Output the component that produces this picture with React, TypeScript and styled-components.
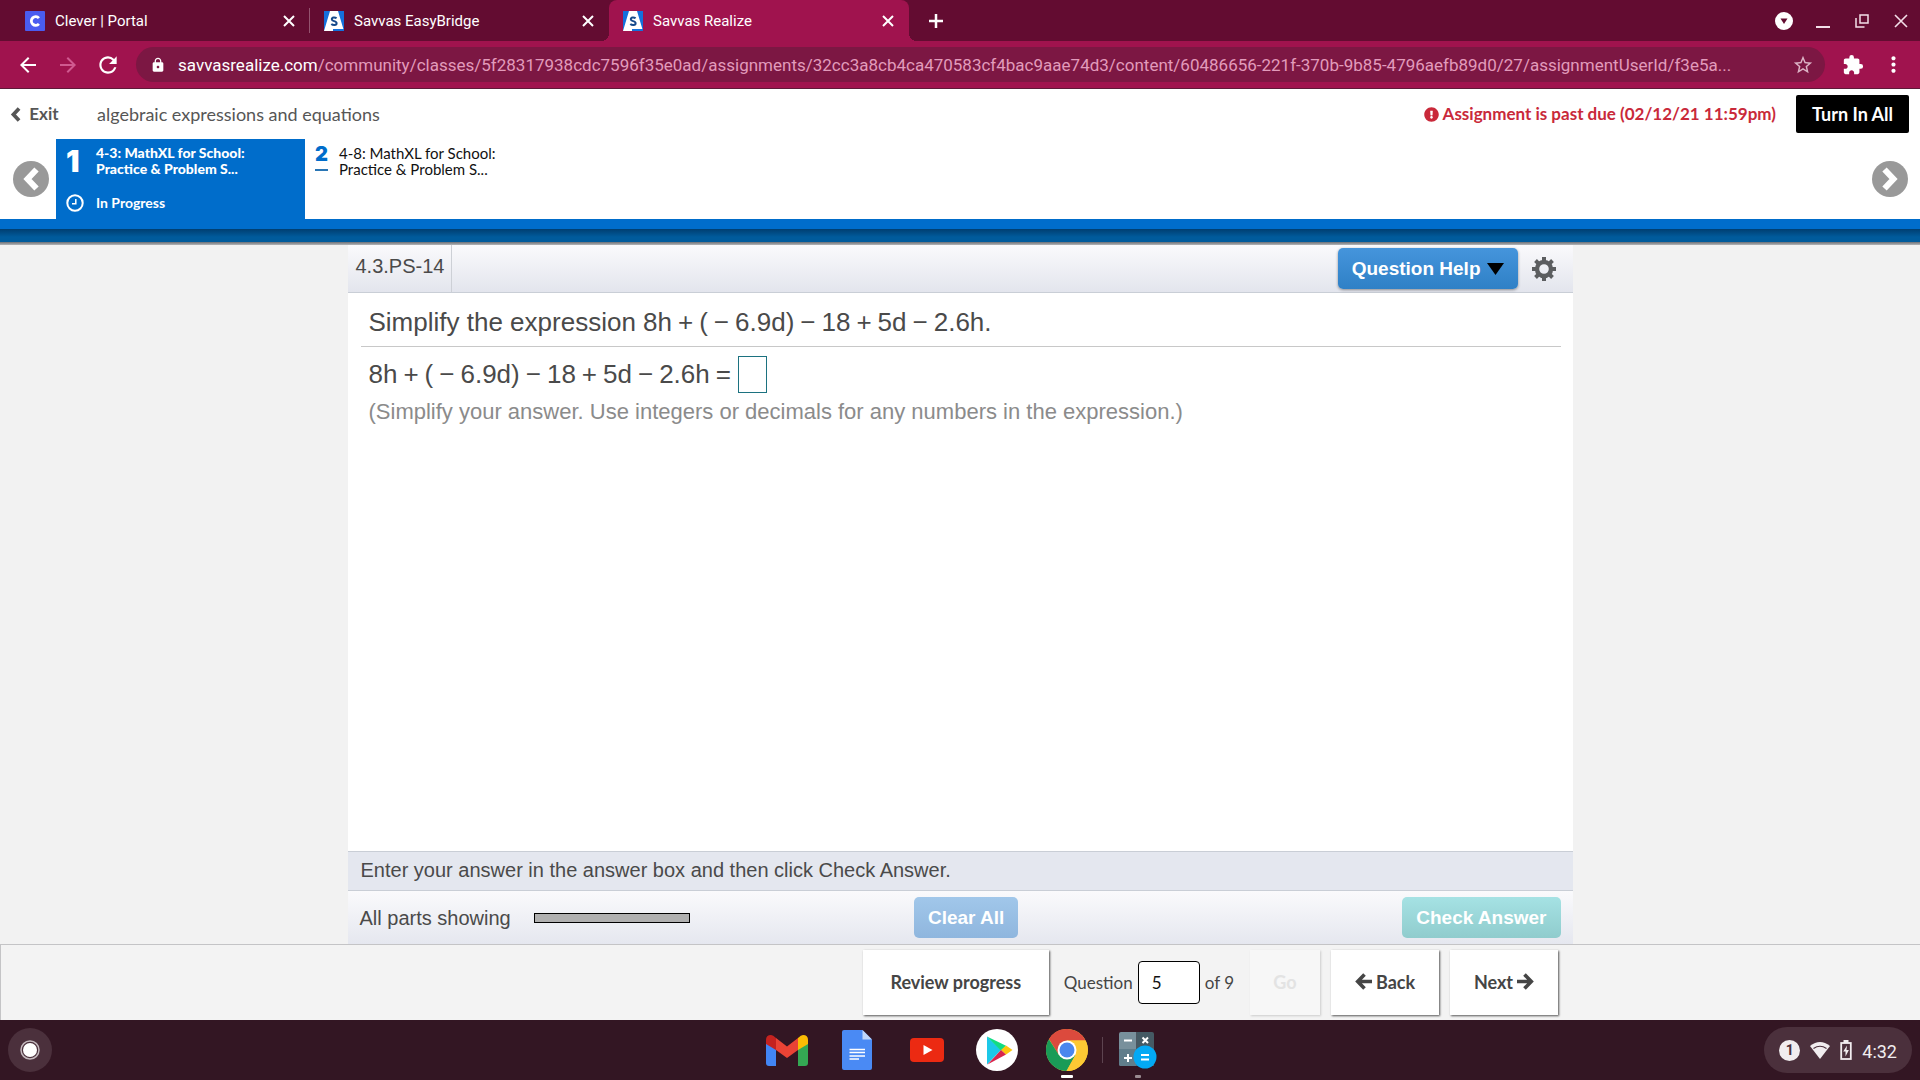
import React from "react";
import styled, { createGlobalStyle, css } from "styled-components";
import {
  MdArrowBack,
  MdArrowForward,
  MdRefresh,
  MdLock,
  MdStarBorder,
  MdExtension,
  MdMoreVert,
} from "react-icons/md";
import { FaExclamationCircle } from "react-icons/fa";

const brandFont = `Lato, "Noto Sans", sans-serif`;
const numeralFont = `Inter, "Noto Sans", sans-serif`;
const chromeFont = `Roboto, "Noto Sans", sans-serif`;
const mathFont = `"Liberation Sans", Arial, sans-serif`;

const GlobalStyle = createGlobalStyle`
  *, *::before, *::after { box-sizing: border-box; }
  body { margin: 0; background: #f2f2f2; font-family: ${mathFont}; }
  button, input { font: inherit; color: inherit; margin: 0; }
  button { border: 0; padding: 0; background: none; cursor: pointer; }
  a { color: inherit; text-decoration: none; }
  p, h1, h2 { margin: 0; font-weight: 400; }
  svg { display: block; flex: none; }
`;

const Screen = styled.div`
  min-height: 100vh;
  display: flex;
  flex-direction: column;
`;

/* ---------- browser frame ---------- */

const TabStrip = styled.div`
  height: 41px;
  display: flex;
  align-items: stretch;
  background: #630c31;
  color: #fff;
  font: 15px/20px ${chromeFont};
`;

const TabList = styled.div`
  display: flex;
  padding-left: 9px;
`;

const Tab = styled.div<{ $active?: boolean; $divided?: boolean }>`
  width: 300px;
  padding: 0 11px 0 15px;
  display: flex;
  align-items: center;
  gap: 10px;
  position: relative;
  ${(p) =>
    p.$divided &&
    css`
      padding: 0 10px 0 16px;
      &::after {
        content: "";
        position: absolute;
        right: -1px;
        top: 8px;
        bottom: 8px;
        width: 1px;
        background: #94536f;
      }
    `}
  ${(p) =>
    p.$active &&
    css`
      padding-left: 14px;
      background: #a0134e;
      border-radius: 8px 8px 0 0;
      &::before, &::after {
        content: "";
        position: absolute;
        bottom: 0;
        width: 8px;
        height: 8px;
      }
      &::before { right: 100%; background: radial-gradient(circle at 0 0, transparent 8px, #a0134e 8px); }
      &::after { left: 100%; background: radial-gradient(circle at 100% 0, transparent 8px, #a0134e 8px); }
    `}
`;

const TabTitle = styled.span`
  flex: 1;
  white-space: nowrap;
`;

const IconButton = styled.button<{ $dim?: boolean; $soft?: boolean }>`
  width: 20px;
  height: 20px;
  display: flex;
  align-items: center;
  justify-content: center;
  color: ${(p) => (p.$dim ? "#d05a90" : p.$soft ? "#dcb4c6" : "#fff")};
`;

const NewTab = styled(IconButton)`
  align-self: center;
  margin-left: 17px;
`;

const WindowControls = styled.div`
  margin-left: auto;
  padding-right: 9px;
  display: flex;
  align-items: center;
  gap: 19px;
`;

const Toolbar = styled.div`
  height: 48px;
  padding: 0 17px 0 18px;
  display: flex;
  align-items: center;
  gap: 18px;
  background: #a0134e;
  border-bottom: 1px solid #5d1a38;
  color: #fff;
`;

const ToolbarGroup = styled.div`
  display: flex;
  gap: 20px;
`;

const AddressBar = styled.div`
  flex: 1;
  min-width: 0;
  height: 35px;
  padding: 0 12px 0 14px;
  display: flex;
  align-items: center;
  gap: 12px;
  border-radius: 18px;
  background: #7c1743;
  font: 17px/24px ${chromeFont};
`;

const Url = styled.span`
  flex: 1;
  min-width: 0;
  overflow: hidden;
  white-space: nowrap;
  color: #e29bbb;
  b { font-weight: 400; color: #fff; }
`;

/* ---------- assignment header ---------- */

const Header = styled.header`
  background: #fff;
  font-family: ${brandFont};
`;

const HeaderTop = styled.div`
  height: 50px;
  padding: 0 11px 0 10px;
  display: flex;
  align-items: center;
  color: #565656;
`;

const ExitLink = styled.a`
  display: flex;
  align-items: center;
  gap: 8px;
  width: 87px;
  font-size: 17px;
  line-height: 24px;
  font-weight: 700;
`;

const AssignmentTitle = styled.h1`
  font-size: 18px;
  line-height: 24px;
`;

const PastDue = styled.p`
  margin-left: auto;
  display: flex;
  align-items: center;
  gap: 4px;
  font-size: 17px;
  line-height: 24px;
  font-weight: 700;
  color: #c9293a;
`;

const TurnIn = styled.button`
  height: 38px;
  margin-left: 20px;
  padding: 0 16px;
  border-radius: 2px;
  background: #000;
  color: #fff;
  font-size: 18px;
  font-weight: 700;
`;

const Carousel = styled.nav`
  height: 80px;
  padding: 0 12px 0 13px;
  display: flex;
`;

const RoundArrow = styled.button`
  width: 36px;
  height: 36px;
  margin-top: 22px;
  border-radius: 50%;
  background: #999;
  color: #fff;
  display: flex;
  align-items: center;
  justify-content: center;
`;

const Items = styled.div`
  flex: 1;
  display: flex;
  padding-left: 7px;
`;

const Item = styled.a<{ $active?: boolean }>`
  width: 249px;
  padding: 6px 10px 0;
  display: grid;
  grid-template-columns: ${(p) => (p.$active ? 30 : 24)}px 1fr;
  grid-template-rows: 40px 34px;
  font-size: ${(p) => (p.$active ? 14 : 15)}px;
  line-height: 16px;
  color: ${(p) => (p.$active ? "#fff" : "#111")};
  background: ${(p) => (p.$active ? "#006dcb" : "transparent")};
  font-weight: ${(p) => (p.$active ? 900 : 400)};
`;

const ItemNumber = styled.span<{ $active?: boolean }>`
  justify-self: start;
  align-self: start;
  font-family: ${numeralFont};
  font-weight: 900;
  font-size: ${(p) => (p.$active ? 30 : 20)}px;
  line-height: ${(p) => (p.$active ? 32 : 18)}px;
  ${(p) => !p.$active && css`color: #006dcb; padding-bottom: 6px; border-bottom: 2px solid #2a76b5;`}
`;

const ItemStatus = styled.span`
  font-weight: 700;
  padding-top: 10px;
`;

const StatusIcon = styled.span`
  padding-top: 9px;
`;

const BlueRule = styled.div`
  height: 10px;
  background: #006dcb;
`;

const DeepRule = styled.div`
  height: 16px;
  background: linear-gradient(#003e70, #005b9c 8px, #005b9c 13px, #6b7076 13px, #b4b6b9 16px);
`;

/* ---------- question player ---------- */

const Panel = styled.main`
  flex: 1;
  width: 100%;
  max-width: 1225px;
  margin: 0 auto;
  display: flex;
  flex-direction: column;
  background: #fff;
  color: #4a4a4a;
`;

const PanelBar = styled.div`
  height: 48px;
  padding-right: 17px;
  display: flex;
  align-items: center;
  background: linear-gradient(#fafafc, #e3e5ed);
  border-bottom: 1px solid #c9ced6;
`;

const ExerciseId = styled.h2`
  align-self: stretch;
  width: 104px;
  padding: 9px 0 0 8px;
  border-right: 1px solid #cdd0d6;
  font-size: 20px;
  line-height: 24px;
`;

const ActionButton = styled.button<{ $tone: "blue" | "paleBlue" | "teal" }>`
  height: 41px;
  padding: 0 14px;
  display: flex;
  align-items: center;
  gap: 6px;
  border-radius: 5px;
  color: #fff;
  font: bold 19px/24px ${mathFont};
  background: ${(p) =>
    p.$tone === "blue"
      ? "linear-gradient(#4595dc, #2f80c6)"
      : p.$tone === "paleBlue"
        ? "linear-gradient(#a1c7ea, #8fb6de)"
        : "linear-gradient(#a5e2e4, #90cccd)"};
  ${(p) => p.$tone === "blue" && css`box-shadow: 0 1px 3px rgba(0, 0, 0, 0.4);`}
`;

const HelpGroup = styled.div`
  margin-left: auto;
  display: flex;
  align-items: center;
  gap: 14px;
`;

const SettingsButton = styled.button`
  color: #5c5e60;
`;

const Problem = styled.section`
  flex: 1;
  padding: 0 12px 0 13px;
`;

const Prompt = styled.p`
  padding: 13px 8px 7px;
  border-bottom: 1px solid #c8c8c8;
  font-size: 26px;
  line-height: 33px;
`;

const AnswerRow = styled.label`
  padding: 9px 8px 0;
  display: flex;
  align-items: center;
  gap: 7px;
  font-size: 26px;
  line-height: 33px;
`;

const Operator = styled.span`
  margin: 0 6px;
`;

const Relation = styled.span`
  margin-left: 6px;
`;

const AnswerBox = styled.input`
  width: 29px;
  height: 37px;
  padding: 0 4px;
  border: 1px solid #1c7280;
  background: #fff;
`;

const Hint = styled.p`
  padding: 5px 8px 0;
  color: #8b8b8b;
  font-size: 22px;
  line-height: 28px;
`;

const Instruction = styled.p`
  padding: 6px 12px 8px 13px;
  border-top: 1px solid #c9ced6;
  border-bottom: 1px solid #c9ced6;
  background: #e4e7ef;
  font-size: 20px;
  line-height: 24px;
`;

const PartsBar = styled.div`
  height: 53px;
  padding: 0 12px;
  display: grid;
  grid-template-columns: 46% auto 1fr;
  column-gap: 2px;
  align-items: center;
  background: linear-gradient(#fafafc, #e5e7ef);
`;

const Parts = styled.div`
  display: flex;
  align-items: center;
  gap: 23px;
  font-size: 20px;
  line-height: 24px;
`;

const PartsMeter = styled.div`
  width: 156px;
  height: 10px;
  border: 1px solid #000;
  background: #b0b0b0;
`;

const RightCell = styled.div`
  display: flex;
  justify-content: flex-end;
`;

/* ---------- question navigation ---------- */

const NavBand = styled.footer`
  border-top: 1px solid #c4c4c6;
  border-left: 1px solid #c4c4c6;
  background: #f3f3f3;
`;

const NavInner = styled.div`
  max-width: 1225px;
  margin: 0 auto;
  padding: 5px 15px 5px 0;
  display: flex;
  justify-content: flex-end;
  align-items: center;
  font-family: ${brandFont};
  color: #454545;
`;

const NavButton = styled.button<{ $width: number }>`
  width: ${(p) => p.$width}px;
  height: 65px;
  padding-bottom: 2px;
  display: flex;
  align-items: center;
  justify-content: center;
  gap: 4px;
  background: #fff;
  box-shadow: 1px 1px 2px #555;
  font-size: 18px;
  font-weight: 700;
  &:disabled { background: #f7f7f7; color: #e3e3e3; box-shadow: 1px 1px 2px #ccc; }
`;

const Jump = styled.label`
  margin: 0 16px 0 15px;
  display: flex;
  align-items: center;
  gap: 5px;
  font-size: 17px;
  line-height: 24px;
`;

const PageInput = styled.input`
  width: 62px;
  height: 43px;
  padding: 0 13px;
  border: 1px solid #000;
  border-radius: 4px;
  background: #fff;
  color: #111;
`;

const Pager = styled.div`
  display: flex;
  gap: 11px;
`;

/* ---------- system shelf ---------- */

const Shelf = styled.div`
  height: 60px;
  padding: 0 8px;
  display: grid;
  grid-template-columns: 1fr auto 1fr;
  align-items: center;
  background: #331623;
`;

const Launcher = styled.button`
  width: 44px;
  height: 44px;
  border-radius: 50%;
  background: #4b303c;
  display: flex;
  align-items: center;
  justify-content: center;
`;

const Apps = styled.div`
  padding-left: 5px;
  display: flex;
  align-items: center;
`;

const AppButton = styled.button<{ $mark?: "wide" | "small" }>`
  width: 70px;
  height: 60px;
  position: relative;
  display: flex;
  align-items: center;
  justify-content: center;
  ${(p) =>
    p.$mark &&
    css`
      &::after {
        content: "";
        position: absolute;
        bottom: 2px;
        left: 50%;
        width: ${p.$mark === "wide" ? 12 : 6}px;
        height: 3px;
        border-radius: 1px;
        transform: translateX(-50%);
        background: ${p.$mark === "wide" ? "#fff" : "#9a8b91"};
      }
    `}
`;

const ShelfDivider = styled.div`
  width: 1px;
  height: 26px;
  background: #5d4450;
`;

const Status = styled.button`
  justify-self: end;
  height: 46px;
  padding: 0 15px;
  display: flex;
  align-items: center;
  gap: 10px;
  border-radius: 23px;
  background: #4b303c;
  color: #f1edef;
  font: 18px/24px ${chromeFont};
`;

const StatusCount = styled.span`
  width: 21px;
  height: 21px;
  border-radius: 50%;
  background: #f1edef;
  color: #4b303c;
  font: 700 14px/21px ${chromeFont};
  text-align: center;
`;

const Clock = styled.span`
  padding-top: 3px;
`;

/* ---------- drawings ---------- */

const CleverIcon = () => (
  <svg width="20" height="20" viewBox="0 0 20 20">
    <rect width="20" height="20" rx="1" fill="#4a5cf0" />
    <path d="M13.9 7.2A4.3 4.3 0 1 0 13.9 12.8" fill="none" stroke="#fff" strokeWidth="2.8" />
  </svg>
);

const SavvasIcon = () => (
  <svg width="20" height="20" viewBox="0 0 20 20">
    <rect width="20" height="20" fill="#1470dc" />
    <path d="M6 0H14L19.4 18H9v2H0Z" fill="#fff" />
    <path
      d="M12.600 7.300C11 6 7.800 6 7.800 8.300C7.800 10.800 12.600 9.500 12.600 12.200C12.600 14.500 9 14.500 7.300 13"
      fill="none"
      stroke="#174a8c"
      strokeWidth="2"
    />
  </svg>
);

const CloseMark = () => (
  <svg width="12" height="12" viewBox="0 0 12 12" stroke="#fff" strokeWidth="2">
    <path d="M1 1L11 11M11 1L1 11" />
  </svg>
);

const PlusMark = () => (
  <svg width="16" height="16" viewBox="0 0 16 16" stroke="#fff" strokeWidth="2.5">
    <path d="M8 1V15M1 8H15" />
  </svg>
);

const Chevron = ({ size, flip }: { size: number; flip?: boolean }) => (
  <svg
    width={(size * 3) / 4}
    height={size}
    viewBox="0 0 18 24"
    fill="none"
    stroke="currentColor"
    strokeWidth="6"
    strokeLinejoin="miter"
  >
    <path d={flip ? "M3.500 2.500L12.500 12L3.500 21.500" : "M14.500 2.500L5.500 12L14.500 21.500"} />
  </svg>
);

const BoldArrow = ({ flip }: { flip?: boolean }) => (
  <svg width="17" height="17" viewBox="0 0 17 17" fill="none" stroke="currentColor" strokeWidth="3.6">
    <path d={flip ? "M0 8.500H13M7.500 1.500L14.300 8.500L7.500 15.500" : "M17 8.500H4M9.500 1.500L2.700 8.500L9.500 15.500"} />
  </svg>
);

const GearIcon = () => (
  <svg width="24" height="24" viewBox="0 0 24 24" stroke="currentColor" fill="none">
    <circle cx="12" cy="12" r="7" strokeWidth="4.4" />
    {[0, 45, 90, 135].map((angle) => (
      <path key={angle} d="M12 0V4M12 20V24" strokeWidth="4" transform={`rotate(${angle} 12 12)`} />
    ))}
  </svg>
);

const ClockIcon = () => (
  <svg width="18" height="18" viewBox="0 0 18 18" fill="none" stroke="#fff">
    <circle cx="9" cy="9" r="7.7" strokeWidth="2" />
    <path d="M9.800 5V9.800H6" strokeWidth="1.500" />
  </svg>
);

const GmailIcon = () => (
  <svg width="42" height="31" viewBox="0 0 42 31">
    <path d="M0 8L10 14V31H3Q0 31 0 28Z" fill="#4285f4" />
    <path d="M42 8L32 14V31H39Q42 31 42 28Z" fill="#34a853" />
    <path d="M0 5Q0 0 5 0Q7 0 10 3V15L0 9Z" fill="#c5221f" />
    <path d="M42 5Q42 0 37 0Q35 0 32 3V15L42 9Z" fill="#fbbc04" />
    <path d="M10 3L21 11.500L32 3V15L21 23L10 15Z" fill="#ea4335" />
  </svg>
);

const DocsIcon = () => (
  <svg width="30" height="40" viewBox="0 0 30 40">
    <path d="M2 0H20.500L30 9.500V38Q30 40 28 40H2Q0 40 0 38V2Q0 0 2 0Z" fill="#4a8af4" />
    <path d="M20.500 0L30 9.500H20.500Z" fill="#c0d7fb" />
    <path d="M7.500 19.500H23M7.500 22.500H23M7.500 26H23M7.500 29H17" stroke="#fff" strokeWidth="1.600" />
  </svg>
);

const YouTubeIcon = () => (
  <svg width="34" height="24" viewBox="0 0 34 24">
    <rect width="34" height="24" rx="4" fill="#ec2a12" />
    <path d="M13.500 7L22.500 12L13.500 17Z" fill="#fff" />
  </svg>
);

const PlayIcon = () => (
  <svg width="42" height="42" viewBox="0 0 42 42">
    <circle cx="21" cy="21" r="21" fill="#fff" />
    <path d="M11 7.500V35.500L25 21Z" fill="#1cc8e8" />
    <path d="M11 7.500L30 16.800L25 21.800Z" fill="#12dc82" />
    <path d="M30 16.500L36.500 21L30 25.500L25 21Z" fill="#fdc60c" />
    <path d="M11.500 35.500L30 25.500L25 21Z" fill="#d8264c" />
  </svg>
);

const ChromeIcon = () => (
  <svg width="42" height="42" viewBox="0 0 42 42">
    <circle cx="21" cy="21" r="21" fill="#fcc934" />
    <path d="M21 21L12.800 25.800L3 10A21 21 0 0 1 39.500 11.500H21Z" fill="#dc4a3d" />
    <path d="M2.900 10.300A21 21 0 0 0 20.500 42L29.500 26L21 21L12.800 25.800Z" fill="#1a9b57" />
    <path d="M21 11.500H39.500A21 21 0 0 1 20.500 42L29.400 26Z" fill="#fcc934" />
    <circle cx="21" cy="21" r="9.500" fill="#fff" />
    <circle cx="21" cy="21" r="7.500" fill="#4a86ee" />
  </svg>
);

const CalculatorIcon = () => (
  <svg width="38" height="38" viewBox="0 0 38 38">
    <path d="M2 1H17.500V35H2Q0 35 0 33V3Q0 1 2 1Z" fill="#78909c" />
    <path d="M17.500 1H33Q35 1 35 3V35H17.500Z" fill="#455a64" />
    <path d="M0 18H17.500V35H2Q0 35 0 33Z" fill="#607d8b" />
    <path d="M5 9.500H13M5 27H13M9 23V31M23.500 6.500L29 12M29 6.500L23.500 12" stroke="#fff" strokeWidth="2" />
    <circle cx="26" cy="26" r="11.500" fill="#03a9f4" />
    <path d="M22 24H30M22 28.500H30" stroke="#fff" strokeWidth="2" />
  </svg>
);

const LauncherIcon = () => (
  <svg width="20" height="20" viewBox="0 0 20 20">
    <circle cx="10" cy="10" r="9" fill="none" stroke="#c3b8bd" strokeWidth="1.500" />
    <circle cx="10" cy="10" r="7" fill="#fff" />
  </svg>
);

const WifiIcon = () => (
  <svg width="20" height="17" viewBox="0 0 20 17" fill="#f1edef">
    <path d="M0 4Q10 -4 20 4L10 17Z" />
    <path d="M3.500 6.500Q10 2 16.500 6.500" fill="none" stroke="#4b303c" strokeWidth="1.200" />
  </svg>
);

const BatteryIcon = () => (
  <svg width="12" height="20" viewBox="0 0 12 20" fill="none" stroke="#f1edef" strokeWidth="1.800">
    <rect x="1.200" y="3" width="9.600" height="16" />
    <path d="M3.500 1.500H8.500" strokeWidth="3" />
    <path d="M7 5.500L3.200 11.500H5.500V16.500L8.900 10H6.500Z" fill="#f1edef" stroke="none" />
  </svg>
);

/* ---------- page ---------- */

const tabs = [
  { title: "Clever | Portal", Icon: CleverIcon, divided: true },
  { title: "Savvas EasyBridge", Icon: SavvasIcon },
  { title: "Savvas Realize", Icon: SavvasIcon, active: true },
];

const Expression = () => (
  <>
    8h<Operator>+</Operator>(<Operator>−</Operator>6.9d)<Operator>−</Operator>18<Operator>+</Operator>5d
    <Operator>−</Operator>2.6h
  </>
);

export default function App() {
  return (
    <Screen>
      <GlobalStyle />
      <TabStrip>
        <TabList>
          {tabs.map(({ title, Icon, divided, active }) => (
            <Tab key={title} $active={active} $divided={divided}>
              <Icon />
              <TabTitle>{title}</TabTitle>
              <IconButton aria-label={`Close ${title}`}>
                <CloseMark />
              </IconButton>
            </Tab>
          ))}
        </TabList>
        <NewTab aria-label="New tab">
          <PlusMark />
        </NewTab>
        <WindowControls>
          <IconButton aria-label="Account">
            <svg width="18" height="18" viewBox="0 0 18 18">
              <circle cx="9" cy="9" r="9" fill="#fff" />
              <path d="M5.500 6.500H12.500L9 12Z" fill="#630c31" />
            </svg>
          </IconButton>
          <IconButton aria-label="Minimize">
            <svg width="14" height="16" viewBox="0 0 14 16">
              <path d="M0 14H14" stroke="#f3dfe8" strokeWidth="2" />
            </svg>
          </IconButton>
          <IconButton aria-label="Restore">
            <svg width="14" height="14" viewBox="0 0 14 14" fill="none" stroke="#f3dfe8" strokeWidth="1.500">
              <path d="M5 1H13V9H5ZM1 4V13H9.500" />
            </svg>
          </IconButton>
          <IconButton aria-label="Close window">
            <svg width="14" height="14" viewBox="0 0 14 14" stroke="#f3dfe8" strokeWidth="1.600">
              <path d="M1 1L13 13M13 1L1 13" />
            </svg>
          </IconButton>
        </WindowControls>
      </TabStrip>
      <Toolbar>
        <ToolbarGroup>
          <IconButton aria-label="Back">
            <MdArrowBack size={24} />
          </IconButton>
          <IconButton aria-label="Forward" $dim>
            <MdArrowForward size={24} />
          </IconButton>
          <IconButton aria-label="Reload">
            <MdRefresh size={26} />
          </IconButton>
        </ToolbarGroup>
        <AddressBar>
          <MdLock size={16} />
          <Url>
            <b>savvasrealize.com</b>
            /community/classes/5f28317938cdc7596f35e0ad/assignments/32cc3a8cb4ca470583cf4bac9aae74d3/content/60486656-221f-370b-9b85-4796aefb89d0/27/assignmentUserId/f3e5a...
          </Url>
          <IconButton aria-label="Bookmark" $soft>
            <MdStarBorder size={22} />
          </IconButton>
        </AddressBar>
        <ToolbarGroup>
          <IconButton aria-label="Extensions">
            <MdExtension size={22} />
          </IconButton>
          <IconButton aria-label="Menu">
            <MdMoreVert size={25} />
          </IconButton>
        </ToolbarGroup>
      </Toolbar>

      <Header>
        <HeaderTop>
          <ExitLink href="#exit">
            <Chevron size={15} />
            Exit
          </ExitLink>
          <AssignmentTitle>algebraic expressions and equations</AssignmentTitle>
          <PastDue>
            <FaExclamationCircle size={15} />
            Assignment is past due (02/12/21 11:59pm)
          </PastDue>
          <TurnIn>Turn In All</TurnIn>
        </HeaderTop>
        <Carousel aria-label="Assignment items">
          <RoundArrow aria-label="Previous items">
            <Chevron size={24} />
          </RoundArrow>
          <Items>
            <Item href="#item-1" $active>
              <ItemNumber $active>1</ItemNumber>
              <span>
                4-3: MathXL for School:
                <br />
                Practice &amp; Problem S...
              </span>
              <StatusIcon>
                <ClockIcon />
              </StatusIcon>
              <ItemStatus>In Progress</ItemStatus>
            </Item>
            <Item href="#item-2">
              <ItemNumber>2</ItemNumber>
              <span>
                4-8: MathXL for School:
                <br />
                Practice &amp; Problem S...
              </span>
            </Item>
          </Items>
          <RoundArrow aria-label="Next items">
            <Chevron size={24} flip />
          </RoundArrow>
        </Carousel>
        <BlueRule />
        <DeepRule />
      </Header>

      <Panel>
        <PanelBar>
          <ExerciseId>4.3.PS-14</ExerciseId>
          <HelpGroup>
            <ActionButton $tone="blue">
              Question Help
              <svg width="17" height="12" viewBox="0 0 17 12">
                <path d="M0 0H17L8.500 12Z" fill="#000" />
              </svg>
            </ActionButton>
            <SettingsButton aria-label="Settings">
              <GearIcon />
            </SettingsButton>
          </HelpGroup>
        </PanelBar>
        <Problem>
          <Prompt>
            Simplify the expression <Expression />.
          </Prompt>
          <AnswerRow>
            <span>
              <Expression />
              <Relation>=</Relation>
            </span>
            <AnswerBox type="text" />
          </AnswerRow>
          <Hint>(Simplify your answer. Use integers or decimals for any numbers in the expression.)</Hint>
        </Problem>
        <Instruction>Enter your answer in the answer box and then click Check Answer.</Instruction>
        <PartsBar>
          <Parts>
            All parts showing
            <PartsMeter />
          </Parts>
          <ActionButton $tone="paleBlue">Clear All</ActionButton>
          <RightCell>
            <ActionButton $tone="teal">Check Answer</ActionButton>
          </RightCell>
        </PartsBar>
      </Panel>

      <NavBand>
        <NavInner>
          <NavButton $width={186}>Review progress</NavButton>
          <Jump>
            Question
            <PageInput type="text" defaultValue="5" />
            of 9
          </Jump>
          <Pager>
            <NavButton $width={70} disabled>
              Go
            </NavButton>
            <NavButton $width={108}>
              <BoldArrow />
              Back
            </NavButton>
            <NavButton $width={108}>
              Next
              <BoldArrow flip />
            </NavButton>
          </Pager>
        </NavInner>
      </NavBand>

      <Shelf>
        <Launcher aria-label="Launcher">
          <LauncherIcon />
        </Launcher>
        <Apps>
          <AppButton aria-label="Gmail">
            <GmailIcon />
          </AppButton>
          <AppButton aria-label="Docs">
            <DocsIcon />
          </AppButton>
          <AppButton aria-label="YouTube">
            <YouTubeIcon />
          </AppButton>
          <AppButton aria-label="Play Store">
            <PlayIcon />
          </AppButton>
          <AppButton aria-label="Chrome" $mark="wide">
            <ChromeIcon />
          </AppButton>
          <ShelfDivider />
          <AppButton aria-label="Calculator" $mark="small">
            <CalculatorIcon />
          </AppButton>
        </Apps>
        <Status aria-label="System status">
          <StatusCount>1</StatusCount>
          <WifiIcon />
          <BatteryIcon />
          <Clock>4:32</Clock>
        </Status>
      </Shelf>
    </Screen>
  );
}
